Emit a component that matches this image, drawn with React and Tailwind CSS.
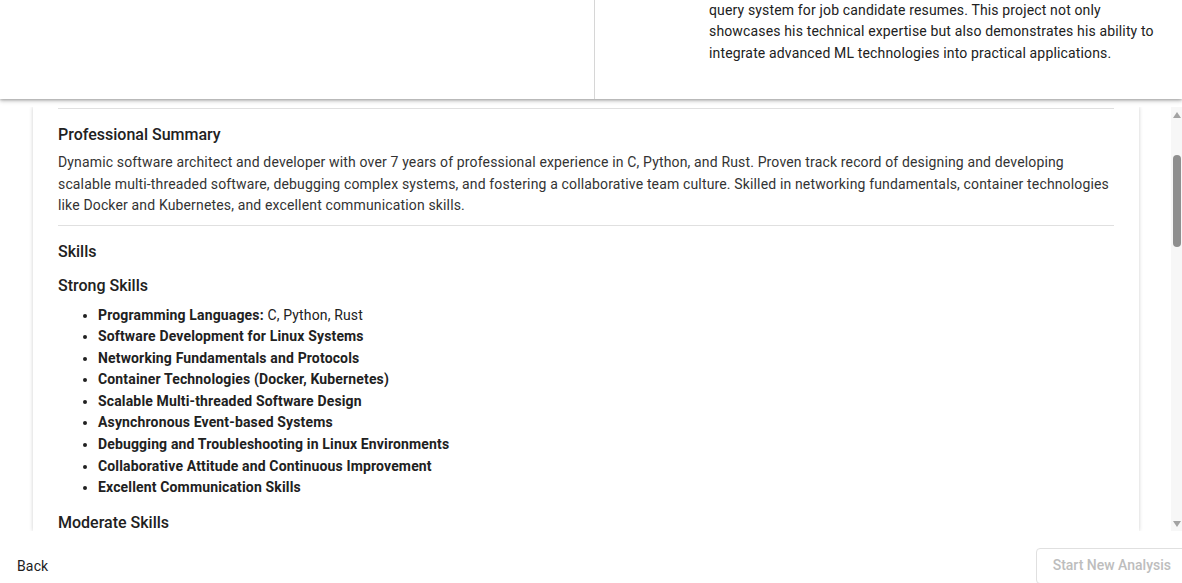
import React from "react";

const strong = [
  ["Programming Languages:", " C, Python, Rust"],
  ["Software Development for Linux Systems"],
  ["Networking Fundamentals and Protocols"],
  ["Container Technologies (Docker, Kubernetes)"],
  ["Scalable Multi-threaded Software Design"],
  ["Asynchronous Event-based Systems"],
  ["Debugging and Troubleshooting in Linux Environments"],
  ["Collaborative Attitude and Continuous Improvement"],
  ["Excellent Communication Skills"],
];

export default function App() {
  return (
    <div
      className="w-[1182px] h-[583px] overflow-hidden bg-white flex flex-col text-[#212121]"
      style={{ fontFamily: "Roboto, 'Liberation Sans', sans-serif" }}
    >
      {/* Top card */}
      <div className="h-[99px] shrink-0 flex bg-white relative z-10 shadow-[0_2px_4px_rgba(0,0,0,0.25),0_1px_2px_rgba(0,0,0,0.15)]">
        <div className="w-[595px] shrink-0 border-r border-[#d6d6d6]" />
        <div className="flex-1 overflow-hidden flex flex-col justify-end pl-[114px] pr-[16px] pb-[35px]">
          <p className="text-[14px] leading-[21.5px] tracking-[0.15px] text-[#212121]">
            query system for job candidate resumes. This project not only
            <br />
            showcases his technical expertise but also demonstrates his ability to
            <br />
            integrate advanced ML technologies into practical applications.
          </p>
        </div>
      </div>

      {/* Scroll area */}
      <div className="mt-[8px] h-[424px] shrink-0 flex">
        <div className="flex-1 overflow-hidden pl-[33px] pr-[32px]">
          <div className="bg-white h-full px-[25px] shadow-[0_0_4px_rgba(0,0,0,0.2)] overflow-hidden">
            <div className="border-t border-[#e0e0e0] mt-[1px]" />
            <h6 className="mt-[14px] text-[16px] leading-[24px] font-medium text-[#212121]">
              Professional Summary
            </h6>
            <p className="mt-[5px] text-[14px] leading-[21.5px] tracking-[0.15px] text-[#333]">
              Dynamic software architect and developer with over 7 years of professional experience in C, Python, and Rust. Proven track record of designing and developing scalable multi-threaded software, debugging complex systems, and fostering a collaborative team culture. Skilled in networking fundamentals, container technologies like Docker and Kubernetes, and excellent communication skills.
            </p>
            <div className="border-t border-[#e0e0e0] mt-[8px]" />
            <h6 className="mt-[14px] text-[16px] leading-[24px] font-medium text-[#212121]">
              Skills
            </h6>
            <h6 className="mt-[10px] text-[16px] leading-[24px] font-medium text-[#212121]">
              Strong Skills
            </h6>
            <ul className="mt-[7px] pl-[40px] list-disc text-[14px] leading-[21.6px] tracking-[0.15px] text-[#212121]">
              {strong.map(([b, r], i) => (
                <li key={i}>
                  <span className="font-bold">{b}</span>
                  {r && <span>{r}</span>}
                </li>
              ))}
            </ul>
            <h6 className="mt-[12px] text-[16px] leading-[24px] font-medium text-[#212121]">
              Moderate Skills
            </h6>
          </div>
        </div>
        {/* Scrollbar */}
        <div className="w-[11px] shrink-0 bg-[#f7f7f7] relative">
          <svg className="absolute left-[2px] top-[5px]" width="8" height="6" viewBox="0 0 8 6">
            <path d="M4 0L8 6H0Z" fill="#a3a3a3" />
          </svg>
          <div className="absolute left-[2px] right-[1px] top-[48px] h-[92px] rounded-full bg-[#8f8f8f]" />
          <svg className="absolute left-[2px] bottom-[4px]" width="8" height="6" viewBox="0 0 8 6">
            <path d="M0 0H8L4 6Z" fill="#a3a3a3" />
          </svg>
        </div>
      </div>

      {/* Footer */}
      <div className="flex-1 flex items-end justify-between">
        <button className="ml-[17px] mb-[7px] text-[14px] leading-[20px] tracking-[0.15px] text-[#212121]">Back</button>
        <button className="mr-[-20px] h-[36px] pl-[16px] pr-[30px] pb-[1px] rounded-[4px] border border-[#e0e0e0] text-[14px] font-medium text-[#bdbdbd] mb-[-1px]">
          Start New Analysis
        </button>
      </div>
    </div>
  );
}
